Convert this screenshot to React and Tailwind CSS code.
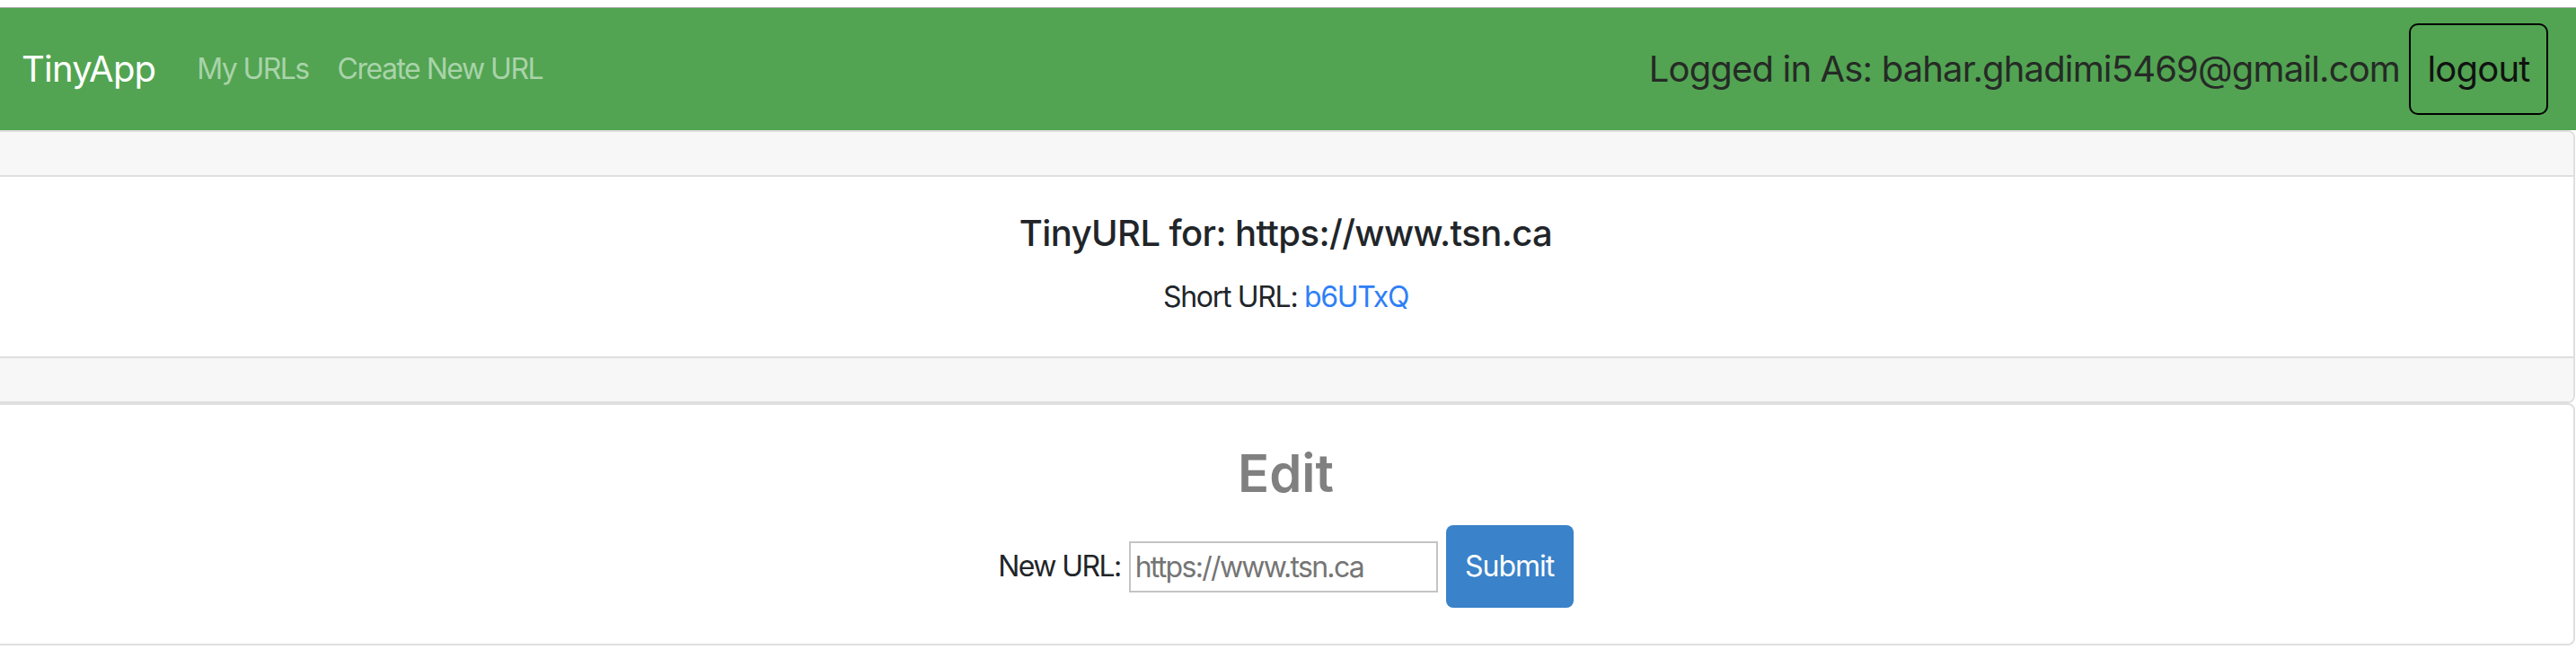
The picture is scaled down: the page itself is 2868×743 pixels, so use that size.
import React from 'react';

function Navbar() {
  return (
    <nav className="h-[136px] bg-[#52a452] flex items-center justify-between pl-[24px] pr-[31px]">
      <div className="flex items-center">
        <a href="#" className="text-[40px] leading-[60px] tracking-[-0.8px] text-white mr-[46px]">TinyApp</a>
        <a href="#" className="text-[32px] leading-[48px] tracking-[-1.6px] text-[#a9d3a9] mr-[32px]">My URLs</a>
        <a href="#" className="text-[32px] leading-[48px] tracking-[-1.5px] text-[#a9d3a9]">Create New URL</a>
      </div>
      <div className="flex items-center gap-[10px]">
        <span className="text-[40px] leading-[60px] tracking-[-0.85px] text-[#262a26]">
          Logged in As: bahar.ghadimi5469@gmail.com
        </span>
        <button className="h-[102px] w-[155px] border-2 border-black rounded-[10px] text-[40px] tracking-[-0.8px] text-[#111] flex items-center justify-center">
          logout
        </button>
      </div>
    </nav>
  );
}

export default function App() {
  return (
    <div className="min-h-screen bg-white font-['Inter','Liberation_Sans',sans-serif] overflow-hidden">
      <div className="h-[8px] bg-white" />
      <div className="h-[1px] bg-[#a8a8a8]" />
      <Navbar />

      {/* Card: url info */}
      <div className="ml-[-8px] mr-[1px] border-2 border-[#dfdfdf] rounded-[8px] overflow-hidden">
        <div className="h-[50px] bg-[#f7f7f7] border-b-2 border-[#dfdfdf]" />
        <div className="h-[200px] pl-[4px] flex flex-col items-center">
          <h5 className="mt-[39px] text-[40px] leading-[48px] font-medium tracking-[-0.6px] text-[#212529]">
            TinyURL for: https://www.tsn.ca
          </h5>
          <p className="mt-[23px] text-[32px] leading-[48px] tracking-[-1.3px] text-[#212529]">
            Short URL: <a href="#" className="text-[#2f7ff7]">b6UTxQ</a>
          </p>
        </div>
        <div className="h-[50px] bg-[#f7f7f7] border-t-2 border-[#dfdfdf]" />
      </div>

      {/* Card: edit form */}
      <div className="ml-[-8px] mr-[1px] border-2 border-[#dfdfdf] rounded-[8px]">
        <div className="h-[266px] pl-[4px] flex flex-col items-center">
          <h2 className="mt-[38px] text-[58px] leading-[76px] font-semibold text-[#808080]">Edit</h2>
          <form className="mt-[20px] flex items-center gap-[9px]" onSubmit={e => e.preventDefault()}>
            <label className="text-[32px] leading-[48px] tracking-[-1.6px] text-[#212529]">New URL:</label>
            <input
              type="text"
              placeholder="https://www.tsn.ca"
              className="w-[344px] h-[57px] border-2 border-[#c4c4c4] px-[5px] text-[32px] tracking-[-1.7px] text-[#212529] placeholder:text-[#757575] outline-none"
            />
            <button className="w-[142px] h-[92px] bg-[#3a82c9] rounded-[8px] text-[32px] tracking-[-1px] text-white">Submit</button>
          </form>
        </div>
      </div>
    </div>
  );
}
